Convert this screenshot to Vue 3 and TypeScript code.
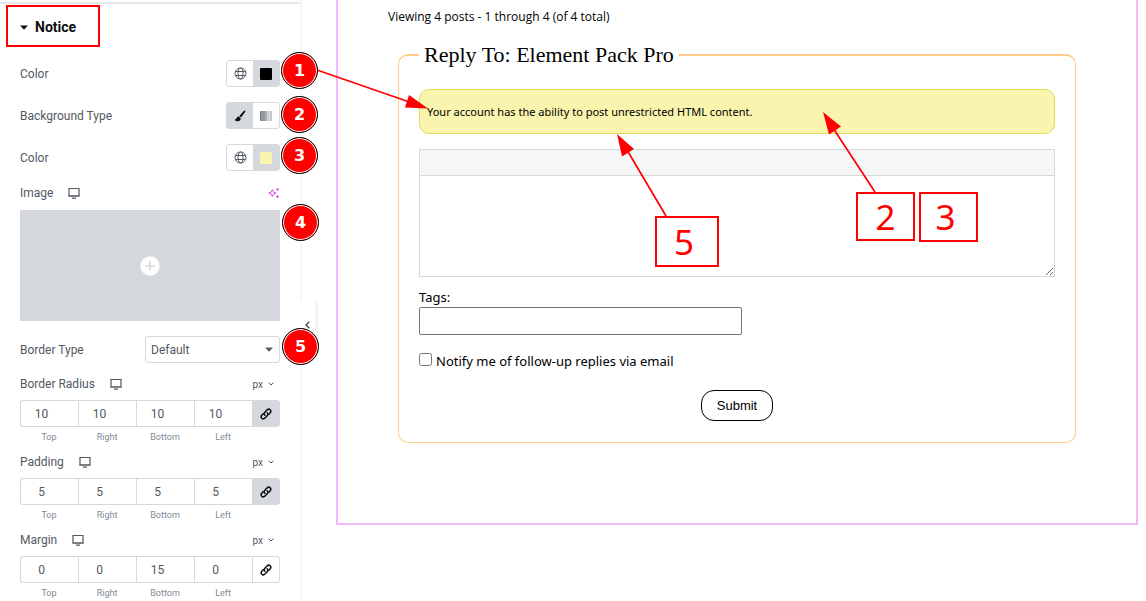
<script setup lang="ts">
import { reactive, ref } from 'vue'

interface Dimension {
  id: string
  label: string
  values: string[]
  linked: boolean
}

const sides = ['Top', 'Right', 'Bottom', 'Left']

const dimensions = reactive<Dimension[]>([
  { id: 'radius', label: 'Border Radius', values: ['10', '10', '10', '10'], linked: true },
  { id: 'padding', label: 'Padding', values: ['5', '5', '5', '5'], linked: true },
  { id: 'margin', label: 'Margin', values: ['0', '0', '15', '0'], linked: false },
])

const borderType = ref('Default')
const tags = ref('')
const reply = ref('')
const notify = ref(false)
</script>

<template>
  <div class="page">
    <aside class="panel">
      <button class="section-title" type="button" aria-expanded="true">
        <svg width="8" height="5" viewBox="0 0 8 5" aria-hidden="true"><path d="M0 .5h8L4 4.7z" fill="#0c0d0e" /></svg>
        Notice
      </button>

      <div class="controls">
        <div class="row">
          <span class="name">Color</span>
          <div class="pair">
            <button type="button" aria-label="Global text color">
              <svg class="globe" width="13" height="13" viewBox="0 0 13 13" aria-hidden="true">
                <circle cx="6.5" cy="6.5" r="5.5" /><ellipse cx="6.5" cy="6.5" rx="2.5" ry="5.5" /><path d="M1.5 4.5h10M1.5 8.5h10" />
              </svg>
            </button>
            <button class="filled" type="button" aria-label="Text color"><span class="swatch black"></span></button>
          </div>
        </div>

        <div class="row">
          <span class="name">Background Type</span>
          <div class="pair">
            <button class="filled" type="button" aria-label="Classic">
              <svg width="12" height="12" viewBox="0 0 12 12" aria-hidden="true">
                <path d="M11 .6c.7.5.4 1.1 0 1.700L7.200 7.300 5.300 5.900 9.800 1c.4-.4.8-.7 1.200-.4z" fill="#0c0d0e" />
                <path d="M4.700 6.400 6.800 8c0 2-1.200 3.300-3.200 3.300-1.600 0-2.600-.6-3.100-1.800 1.300.3 1.700-.4 2.100-1.400.4-1.100 1.100-1.700 2.100-1.700z" fill="#0c0d0e" />
              </svg>
            </button>
            <button type="button" aria-label="Gradient">
              <svg width="12" height="10" viewBox="0 0 12 10" aria-hidden="true">
                <rect width="1" height="10" fill="#747b84" /><rect x="1" width="4" height="10" fill="#9499a0" />
                <rect x="5" width="2" height="10" fill="#a9aeb4" />
                <rect x="7" width="2" height="10" fill="#c9ccd1" /><rect x="9" width="1" height="10" fill="#dfe1e4" />
                <rect x="10" width="2" height="10" fill="#c3c7cc" />
              </svg>
            </button>
          </div>
        </div>

        <div class="row color-row">
          <span class="name">Color</span>
          <div class="pair">
            <button type="button" aria-label="Global background color">
              <svg class="globe" width="13" height="13" viewBox="0 0 13 13" aria-hidden="true">
                <circle cx="6.5" cy="6.5" r="5.5" /><ellipse cx="6.5" cy="6.5" rx="2.5" ry="5.5" /><path d="M1.5 4.5h10M1.5 8.5h10" />
              </svg>
            </button>
            <button class="filled" type="button" aria-label="Background color"><span class="swatch yellow"></span></button>
          </div>
        </div>

        <div class="head image-head">
          <span class="name">Image</span>
          <svg class="desktop" width="12" height="11" viewBox="0 0 12 11" aria-hidden="true"><path d="M1 .5h10v7.500H1z" /><path d="M.5 8h11M4 10.200h4" /></svg>
          <button class="plain end" type="button" aria-label="Generate with AI">
            <svg width="12" height="12" viewBox="0 0 13 12" fill="none" stroke="#e23be2" aria-hidden="true">
              <path d="M4.700 2.300 5.900 5 8.700 6 5.900 7.200 4.700 9.900 3.600 7.200.8 6 3.600 5z" />
              <path d="M10.300.5v3M8.800 2h3M10.300 8.500v3M8.800 10h3" />
            </svg>
          </button>
        </div>
        <button class="media" type="button" aria-label="Choose image">
          <svg width="20" height="20" viewBox="0 0 20 20" aria-hidden="true"><circle cx="10" cy="10" r="9.700" fill="#fff" /><path d="M10 5v10M5 10h10" stroke="#d5d8dc" stroke-width="1.500" /></svg>
        </button>

        <div class="row type-row">
          <label class="name" for="border-type">Border Type</label>
          <div class="select">
            <select id="border-type" v-model="borderType">
              <option>Default</option>
              <option>None</option>
              <option>Solid</option>
            </select>
            <svg width="8" height="5" viewBox="0 0 8 5" aria-hidden="true"><path d="M0 .5h8L4 4.700z" fill="#515962" /></svg>
          </div>
        </div>

        <div v-for="d in dimensions" :key="d.id" class="dimension">
          <div class="head">
            <span class="name">{{ d.label }}</span>
            <svg class="desktop" width="12" height="11" viewBox="0 0 12 11" aria-hidden="true"><path d="M1 .5h10v7.500H1z" /><path d="M.5 8h11M4 10.200h4" /></svg>
            <button class="plain unit end" type="button">
              px
              <svg width="6" height="4" viewBox="0 0 6 4" aria-hidden="true"><path d="M.7.700 3 3 5.300.7" fill="none" stroke="#515962" /></svg>
            </button>
          </div>
          <div class="fields">
            <div v-for="(side, i) in sides" :key="side" class="field">
              <input :id="d.id + side" v-model="d.values[i]" type="text" inputmode="numeric" />
              <label :for="d.id + side">{{ side }}</label>
            </div>
            <button class="link" :class="{ filled: d.linked }" type="button" aria-label="Link values together" @click="d.linked = !d.linked">
              <svg width="12" height="12" viewBox="0 0 12 12" fill="none" stroke="#0c0d0e" stroke-width="1.500" stroke-linecap="round" aria-hidden="true">
                <path d="M4.900 7.200C3.900 6.200 4 5 4.800 4.200L7 2c1-1 2.300-1 3.200-.2.800.9.800 2.200-.2 3.200L8.900 6.100" />
                <path d="M7.100 4.800c1 1 .9 2.200.1 3L5 10c-1 1-2.300 1-3.200.2-.8-.9-.8-2.200.2-3.200l1.100-1.100" />
              </svg>
            </button>
          </div>
        </div>
      </div>

      <button class="collapse" type="button" aria-label="Hide panel">
        <svg width="5" height="8" viewBox="0 0 5 8" aria-hidden="true"><path d="M4.300.8 1 4l3.300 3.200" fill="none" stroke="#3f444b" stroke-width="1.300" /></svg>
      </button>
    </aside>

    <main class="preview">
      <p class="count">Viewing 4 posts - 1 through 4 (of 4 total)</p>
      <form @submit.prevent>
        <fieldset>
          <legend>Reply To: Element Pack Pro</legend>
          <div class="notice">Your account has the ability to post unrestricted HTML content.</div>
          <div class="editor">
            <div class="toolbar"></div>
            <textarea v-model="reply" aria-label="Reply"></textarea>
          </div>
          <label class="tags-label" for="tags">Tags:</label>
          <input id="tags" v-model="tags" class="tags" type="text" />
          <div class="notify">
            <input id="notify" v-model="notify" type="checkbox" />
            <label for="notify">Notify me of follow-up replies via email</label>
          </div>
          <button class="submit" type="submit">Submit</button>
        </fieldset>
      </form>
    </main>

    <div class="annotations">
      <svg class="arrows" width="900" height="240" viewBox="0 0 900 240" aria-hidden="true">
        <g stroke="#f00" stroke-width="1.700">
          <path d="M317 70 408 101.500M875 192 833 128M666 216 627 150" />
        </g>
        <g fill="#f00">
          <path d="M428 108.500 409 95 405 107.500z" />
          <path d="M823 112 841 126.500 829 134.500z" />
          <path d="M617 134 634 149 622 156.500z" />
        </g>
      </svg>
      <span class="frame"></span>
      <span class="badge b1">1</span>
      <span class="badge b2">2</span>
      <span class="badge b3">3</span>
      <span class="badge b4">4</span>
      <span class="badge b5">5</span>
      <span class="callout c5">5</span>
      <span class="callout c2">2</span>
      <span class="callout c3">3</span>
    </div>
  </div>
</template>

<style>
body {
  margin: 0;
  background: #fff;
}
</style>

<style scoped>
* {
  box-sizing: border-box;
}
.page {
  position: relative;
  display: flex;
  align-items: flex-start;
  min-height: 100vh;
  font-family: Roboto, sans-serif;
  font-size: 12px;
  color: #515962;
}
button,
input,
select,
textarea {
  font: inherit;
  color: inherit;
  margin: 0;
  border-radius: 0;
}
button {
  display: flex;
  align-items: center;
  justify-content: center;
  padding: 0;
  border: 0;
  background: none;
}
svg {
  display: block;
  flex: none;
}

/* Settings panel */
.panel {
  position: relative;
  flex: none;
  width: 302px;
  min-height: 100vh;
  padding-top: 2px;
  border-right: 2px solid #f5f6f7;
}
.section-title {
  width: 100%;
  height: 48px;
  justify-content: flex-start;
  gap: 7px;
  padding: 0 20px;
  border-top: 2px solid #e6e8ea;
  font-size: 14px;
  font-weight: 700;
  color: #0c0d0e;
}
.controls {
  padding: 10px 20px 0;
}
.row {
  display: flex;
  align-items: center;
  justify-content: space-between;
  height: 27px;
  margin-bottom: 15px;
}
.color-row {
  margin-bottom: 14px;
}
.pair {
  display: flex;
  width: 54px;
  height: 27px;
  border: 1px solid #d5d8dc;
  border-radius: 3px;
}
.pair button {
  flex: 1;
}
.filled {
  background: #d5d8dc;
}
.globe {
  fill: none;
  stroke: #515962;
}
.swatch {
  width: 12px;
  height: 12px;
  border-radius: 1px;
}
.black {
  background: #000;
}
.yellow {
  background: #f9f4ae;
}
.head {
  display: flex;
  align-items: center;
  height: 16px;
  margin-bottom: 8px;
}
.image-head {
  margin-bottom: 9px;
}
.desktop {
  margin-left: 15px;
  fill: none;
  stroke: #515962;
  stroke-width: 1.2;
}
.end {
  margin-left: auto;
}
.media {
  width: 100%;
  height: 111px;
  margin-bottom: 15px;
  background: #d5d8dc;
}
.type-row {
  margin-bottom: 13px;
}
.select {
  display: grid;
  align-items: center;
  width: 135px;
}
.select > * {
  grid-area: 1 / 1;
}
.select svg {
  justify-self: end;
  margin-right: 7px;
  pointer-events: none;
}
select {
  appearance: none;
  width: 100%;
  height: 27px;
  padding: 0 5px;
  border: 1px solid #d5d8dc;
  border-radius: 3px;
  background: #fff;
}
.unit {
  gap: 5px;
  margin-right: 6px;
  font-size: 10px;
}
.dimension {
  margin-bottom: 11px;
}
.dimension:last-child {
  margin-bottom: 0;
}
.fields {
  display: flex;
  align-items: flex-start;
}
.field {
  flex: 1;
}
.field input {
  display: block;
  width: 100%;
  height: 27px;
  padding: 0 16px 0 0;
  border: 1px solid #d5d8dc;
  border-right: 0;
  background: #fff;
  text-align: center;
}
.field:first-child input {
  border-radius: 3px 0 0 3px;
}
.field label {
  display: block;
  margin-top: 4px;
  font-size: 9px;
  line-height: 12px;
  text-align: center;
  color: #818a96;
}
.link {
  width: 28px;
  height: 27px;
  border: 1px solid #d5d8dc;
  border-radius: 0 3px 3px 0;
}
.collapse {
  position: absolute;
  top: 300px;
  right: -18px;
  width: 18px;
  height: 50px;
  border-right: 3px solid #f3f5f5;
  border-radius: 0 3px 3px 0;
  background: #fff;
}

/* Page preview */
.preview {
  flex: 1;
  margin: 0 8px 0 34px;
  padding: 8px 50px 80px;
  border: 2px solid #f0b8fb;
  border-top: 0;
  font-family: "Noto Sans", "Open Sans", sans-serif;
  font-size: 13px;
  line-height: 18px;
  color: #000;
}
.count {
  margin: 0 0 16px;
  font-family: "Open Sans", sans-serif;
  font-size: 12px;
}
fieldset {
  min-width: 0;
  margin: 0 10px;
  padding: 21px 20px;
  border: 1px solid #ffce8a;
  border-top-width: 2px;
  border-radius: 10px;
}
legend {
  padding: 0 5px;
  font-family: "Liberation Serif", serif;
  font-size: 22px;
  line-height: 26px;
}
.notice {
  padding: 13px 7px 12px;
  border: 1px solid #e6db55;
  border-radius: 10px;
  background: #f9f4ae;
  font-size: 11px;
}
.editor {
  margin-top: 15px;
  border: 1px solid #d5d8dc;
}
.toolbar {
  height: 26px;
  border-bottom: 1px solid #d5d8dc;
  background: #f5f7f7;
}
textarea {
  display: block;
  width: 100%;
  height: 100px;
  border: 0;
  background: #fff;
  resize: vertical;
}
.tags-label {
  display: block;
  margin: 11px 0 1px;
}
.tags {
  display: block;
  width: 323px;
  max-width: 100%;
  height: 28px;
  border: 1px solid #767676;
  border-radius: 2px;
}
.notify {
  display: flex;
  align-items: center;
  gap: 4px;
  margin-top: 17px;
}
.notify input {
  width: 13px;
  height: 13px;
  margin-bottom: 3px;
}
.submit {
  height: 31px;
  margin: 20px auto 0;
  padding: 0 15px;
  border: 1px solid #000;
  border-radius: 13px;
  background: #fff;
  font-family: "Liberation Sans", sans-serif;
}

/* Numbered guide marks laid over both areas */
.annotations {
  position: absolute;
  inset: 0;
  pointer-events: none;
}
.annotations > * {
  position: absolute;
}
.arrows {
  top: 0;
  left: 0;
}
.frame {
  top: 5px;
  left: 6px;
  width: 94px;
  height: 42px;
  border: 2px solid #f00;
}
.badge {
  display: grid;
  place-items: center;
  width: 37px;
  height: 37px;
  border: 1px solid #000;
  border-radius: 50%;
  background: #f00;
  box-shadow: inset 0 0 0 1px #fff;
  font-family: "DejaVu Sans", sans-serif;
  font-size: 16px;
  font-weight: 700;
  color: #fff;
}
.b1 {
  top: 52px;
  left: 281px;
}
.b2 {
  top: 96px;
  left: 281px;
}
.b3 {
  top: 137px;
  left: 281px;
}
.b4 {
  top: 204px;
  left: 282px;
}
.b5 {
  top: 328px;
  left: 282px;
}
.callout {
  display: grid;
  place-items: center;
  border: 2px solid #f00;
  background: #fff;
  font-family: "Noto Sans", sans-serif;
  font-size: 35px;
  line-height: 40px;
  color: #f00;
}
.c5 {
  top: 216px;
  left: 655px;
  width: 64px;
  height: 51px;
  padding-right: 6px;
}
.c2 {
  top: 192px;
  left: 856px;
  width: 59px;
  height: 49px;
}
.c3 {
  top: 192px;
  left: 919px;
  width: 59px;
  height: 50px;
  padding-right: 6px;
}
</style>
